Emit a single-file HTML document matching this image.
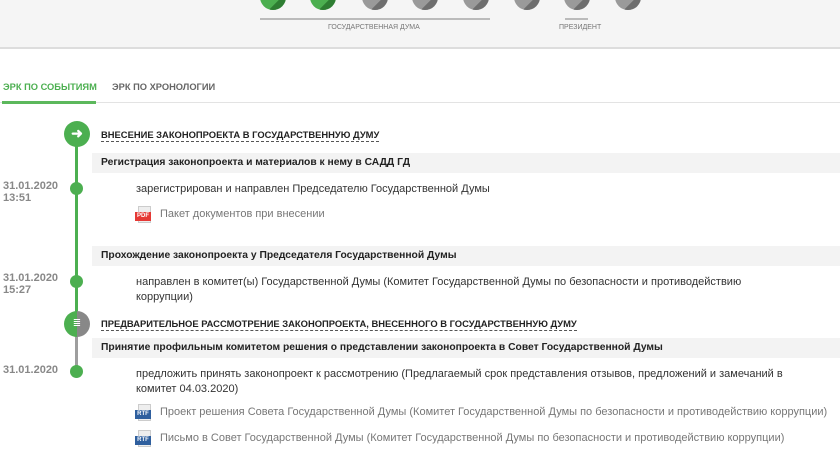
<!DOCTYPE html>
<html><head><meta charset="utf-8"><style>
body{margin:0;width:840px;height:450px;overflow:hidden;background:#fff;font-family:"Liberation Sans",sans-serif;position:relative}
.a{position:absolute;white-space:nowrap}
.top{position:absolute;left:0;top:0;width:840px;height:47px;background:#f5f5f5;border-bottom:2px solid #ddd}
.c{position:absolute;top:-16px;width:26px;height:26px;border-radius:50%;background:#9a9a9a;overflow:hidden}
.c:after{content:"";position:absolute;left:12px;top:14px;width:30px;height:30px;background:#6e6e6e;transform:rotate(45deg)}
.g{background:#4caf50}.g:after{background:#2e7d32}
.sm{font-size:7px;color:#777}
.band{position:absolute;left:92px;width:748px;height:20px;background:#f3f3f3}
.b{font-size:10.3px;font-weight:bold;color:#222}
.t{font-size:11px;color:#333}
.d{font-size:11px;font-weight:bold;color:#888;line-height:12px}
.h{font-size:9.4px;font-weight:bold;color:#222;border-bottom:1px dashed #555;padding-bottom:1px}
.dot{position:absolute;width:13px;height:13px;border-radius:50%;background:#4caf50}
.l{font-size:11px;color:#777}
.ic{position:absolute;width:16px;height:17px}
</style></head><body>
<div class="top">
<div class="c g" style="left:260px"></div>
<div class="c g" style="left:310px"></div>
<div class="c" style="left:362px"></div>
<div class="c" style="left:412px"></div>
<div class="c" style="left:463px"></div>
<div class="c" style="left:514px"></div>
<div class="c" style="left:564px"></div>
<div class="c" style="left:615px"></div>
<div class="a" style="left:260px;top:18px;width:230px;height:2px;background:#bbb"></div>
<div class="a" style="left:565px;top:18px;width:23px;height:2px;background:#bbb"></div>
<div class="a sm" style="left:328px;top:24px">ГОСУДАРСТВЕННАЯ ДУМА</div>
<div class="a sm" style="left:559px;top:24px">ПРЕЗИДЕНТ</div>
</div>
<div class="a" style="left:0;top:102px;width:840px;height:1px;background:#e3e3e3"></div>
<div class="a" style="left:2px;top:101px;width:94px;height:3px;background:#5cb85c"></div>
<div class="a" style="left:3px;top:82px;font-size:9.3px;font-weight:bold;color:#4caf50">ЭРК ПО СОБЫТИЯМ</div>
<div class="a" style="left:112px;top:82px;font-size:9.3px;font-weight:bold;color:#666">ЭРК ПО ХРОНОЛОГИИ</div>

<div class="a" style="left:75px;top:134px;width:3px;height:190px;background:#4caf50"></div>
<div class="a" style="left:75px;top:324px;width:3px;height:46px;background:#9e9e9e"></div>

<div class="band" style="top:153px"></div>
<div class="band" style="top:246px"></div>
<div class="band" style="top:338px"></div>

<div class="a" style="left:64px;top:121px;width:26px;height:26px;border-radius:50%;background:#4caf50;color:#fff;font-size:14px;font-weight:bold;text-align:center;line-height:25px">➜</div>
<div class="a h" style="left:101px;top:129px">ВНЕСЕНИЕ ЗАКОНОПРОЕКТА В ГОСУДАРСТВЕННУЮ ДУМУ</div>
<div class="a b" style="left:101px;top:157px">Регистрация законопроекта и материалов к нему в САДД ГД</div>
<div class="dot" style="left:70px;top:182px"></div>
<div class="a d" style="left:3px;top:180px">31.01.2020<br>13:51</div>
<div class="a t" style="left:136px;top:183px">зарегистрирован и направлен Председателю Государственной Думы</div>
<div class="ic" style="left:135px;top:206px"><div style="position:absolute;left:3px;top:0;width:11px;height:15px;background:#eee;border:1px solid #ccc"></div><div style="position:absolute;left:0;top:6px;width:16px;height:9px;background:#e53935;color:#fff;font-size:6px;font-weight:bold;text-align:center;line-height:9px">PDF</div></div>
<div class="a l" style="left:160px;top:208px">Пакет документов при внесении</div>

<div class="a b" style="left:101px;top:250px">Прохождение законопроекта у Председателя Государственной Думы</div>
<div class="dot" style="left:70px;top:275px"></div>
<div class="a d" style="left:3px;top:272px">31.01.2020<br>15:27</div>
<div class="a t" style="left:136px;top:275px;line-height:15px">направлен в комитет(ы) Государственной Думы (Комитет Государственной Думы по безопасности и противодействию<br>коррупции)</div>

<div class="a" style="left:64px;top:311px;width:26px;height:26px;border-radius:50%;background:linear-gradient(90deg,#4caf50 50%,#888 50%);color:#fff;font-size:10px;text-align:center;line-height:26px">≣</div>
<div class="a h" style="left:101px;top:318px">ПРЕДВАРИТЕЛЬНОЕ РАССМОТРЕНИЕ ЗАКОНОПРОЕКТА, ВНЕСЕННОГО В ГОСУДАРСТВЕННУЮ ДУМУ</div>
<div class="a b" style="left:101px;top:342px">Принятие профильным комитетом решения о представлении законопроекта в Совет Государственной Думы</div>
<div class="dot" style="left:70px;top:365px"></div>
<div class="a d" style="left:3px;top:364px">31.01.2020</div>
<div class="a t" style="left:136px;top:367px;line-height:15px">предложить принять законопроект к рассмотрению (Предлагаемый срок представления отзывов, предложений и замечаний в<br>комитет 04.03.2020)</div>
<div class="ic" style="left:135px;top:404px"><div style="position:absolute;left:3px;top:0;width:11px;height:15px;background:#eee;border:1px solid #ccc"></div><div style="position:absolute;left:0;top:6px;width:16px;height:9px;background:#2f5f9e;color:#fff;font-size:6px;font-weight:bold;text-align:center;line-height:9px">RTF</div></div>
<div class="a l" style="left:160px;top:406px">Проект решения Совета Государственной Думы (Комитет Государственной Думы по безопасности и противодействию коррупции)</div>
<div class="ic" style="left:135px;top:430px"><div style="position:absolute;left:3px;top:0;width:11px;height:15px;background:#eee;border:1px solid #ccc"></div><div style="position:absolute;left:0;top:6px;width:16px;height:9px;background:#2f5f9e;color:#fff;font-size:6px;font-weight:bold;text-align:center;line-height:9px">RTF</div></div>
<div class="a l" style="left:160px;top:432px">Письмо в Совет Государственной Думы (Комитет Государственной Думы по безопасности и противодействию коррупции)</div>
</body></html>
